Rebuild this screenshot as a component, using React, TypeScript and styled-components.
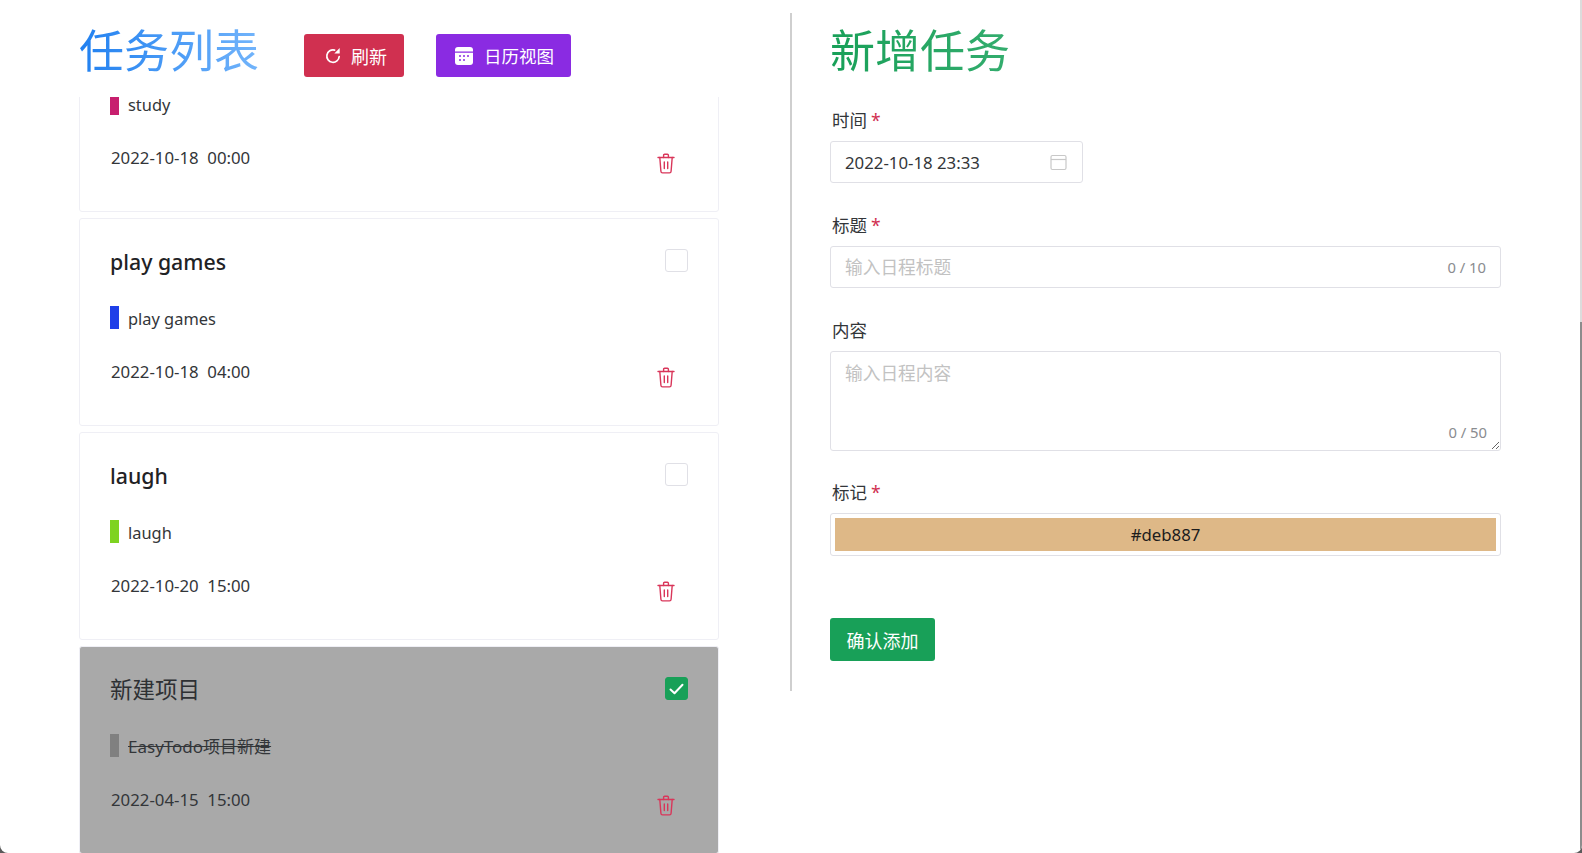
import * as React from "react";
import styled, { createGlobalStyle } from "styled-components";

const FONT = `"Noto Sans", "Noto Sans CJK SC", sans-serif`;

const GlobalStyle = createGlobalStyle`
  html, body {
    margin: 0;
    height: 100%;
    background: #5a5a5a;
    overflow: hidden;
  }
  * {
    box-sizing: border-box;
  }
  #root {
    height: 100%;
  }
`;

const Page = styled.div`
  display: flex;
  width: 1582px;
  height: 853px;
  background: #fff;
  border-radius: 0 0 8px 8px;
  overflow: hidden;
  font-family: ${FONT};
  color: #333639;
`;

const Main = styled.div`
  flex: 1;
  display: flex;
  min-width: 0;
`;

const ScrollTrack = styled.div`
  width: 2px;
  display: flex;
  flex-direction: column;
  background: #dcdcdc;
`;

const ScrollThumb = styled.div`
  margin-top: 322px;
  flex: 1;
  background: #8c8c8c;
`;

const LeftColumn = styled.section`
  width: 790px;
  padding: 0 71px 0 79px;
  display: flex;
  flex-direction: column;
  height: 853px;
`;

const Header = styled.div`
  height: 97px;
  flex-shrink: 0;
  display: flex;
  align-items: flex-start;
`;

const GradientTitle = styled.h1<{ $from: string; $to: string }>`
  margin: 0;
  height: 81px;
  padding-top: 21px;
  font-size: 45px;
  line-height: 60px;
  font-weight: 400;
  background: linear-gradient(90deg, ${p => p.$from}, ${p => p.$to});
  -webkit-background-clip: text;
  background-clip: text;
  color: transparent;
`;

const ActionButton = styled.button<{ $color: string; $left: number; $right: number; $gap: number; $size: number }>`
  height: 43px;
  padding: 0 ${p => p.$right}px 0 ${p => p.$left}px;
  display: flex;
  align-items: center;
  gap: ${p => p.$gap}px;
  border: none;
  border-radius: 3px;
  background: ${p => p.$color};
  color: #fff;
  font-family: ${FONT};
  font-size: ${p => p.$size}px;
  font-weight: 400;
`;

const HeaderButtons = styled.div`
  display: flex;
  gap: 32px;
  margin: 34px 0 0 45px;
`;

const List = styled.div`
  flex: 1;
  min-height: 0;
  margin-bottom: -1px;
  display: flex;
  flex-direction: column;
  justify-content: flex-end;
  gap: 6px;
  overflow: hidden;
`;

const Card = styled.article<{ $done?: boolean }>`
  flex-shrink: 0;
  height: 208px;
  padding: 27px 30px 0;
  border: 1px solid #efeff5;
  border-radius: 3px;
  background: ${p => (p.$done ? "#a9a9a9" : "#fff")};
`;

const CardHead = styled.div`
  height: 32px;
  display: flex;
  align-items: center;
  justify-content: space-between;
`;

const CardTitle = styled.h2<{ $done?: boolean }>`
  margin: 0;
  font-size: ${p => (p.$done ? 22.5 : 21.3)}px;
  line-height: 32px;
  font-weight: ${p => (p.$done ? 400 : 500)};
  color: ${p => (p.$done ? "#2e3033" : "#1f2225")};
`;

const Check = styled.span<{ $on?: boolean }>`
  width: 23px;
  height: 23px;
  align-self: flex-start;
  margin-top: 3px;
  margin-left: auto;
  display: flex;
  align-items: center;
  justify-content: center;
  border-radius: 3px;
  border: 1px solid ${p => (p.$on ? "#18a058" : "#e0e0e6")};
  background: ${p => (p.$on ? "#18a058" : "#fff")};
`;

const TagRow = styled.div`
  margin-top: 28px;
  height: 23px;
  display: flex;
  align-items: center;
  gap: 9px;
`;

const Marker = styled.span<{ $color: string }>`
  width: 9px;
  height: 23px;
  background: ${p => p.$color};
`;

const TagText = styled.span<{ $done?: boolean }>`
  margin-top: 2px;
  font-size: ${p => (p.$done ? 17 : 16.4)}px;
  line-height: 21px;
  font-weight: 400;
  text-decoration: ${p => (p.$done ? "line-through" : "none")};
`;

const DateRow = styled.div`
  margin-top: 32px;
  display: flex;
  align-items: flex-start;
  justify-content: space-between;
  padding-right: 13px;
`;

const DateText = styled.span`
  margin-left: 1px;
  font-size: 16.8px;
  line-height: 22px;
  font-weight: 400;
  white-space: pre;
`;

const TrashButton = styled.span`
  display: flex;
  margin-top: 6px;
`;

const RightColumn = styled.section`
  flex: 1;
  height: 678px;
  margin-top: 13px;
  padding: 0 79px 0 38px;
  border-left: 2px solid #cfcfcf;
`;

const RightHeader = styled.div`
  height: 80px;
  margin-top: -13px;
  margin-bottom: 26px;
`;

const Form = styled.form`
  display: flex;
  flex-direction: column;
`;

const FormItem = styled.div<{ $gap?: number }>`
  margin-bottom: ${p => p.$gap ?? 28}px;
`;

const Label = styled.label`
  display: block;
  height: 35px;
  padding-left: 2px;
  font-size: 17.5px;
  line-height: 28px;
  font-weight: 400;
`;

const Required = styled.span`
  margin-left: 4px;
  color: #d03050;
`;

const Field = styled.div<{ $width?: number }>`
  width: ${p => (p.$width ? `${p.$width}px` : "100%")};
  height: 42px;
  padding: 0 14px;
  display: flex;
  align-items: center;
  gap: 12px;
  border: 1px solid #e0e0e6;
  border-radius: 3px;
  background: #fff;
`;

const TextInput = styled.input`
  flex: 1;
  min-width: 0;
  height: 100%;
  padding: 0;
  border: none;
  outline: none;
  background: transparent;
  font-family: ${FONT};
  font-size: 16.8px;
  font-weight: 400;
  color: #333639;
  &::placeholder {
    color: #c2c2c2;
    font-size: 17.7px;
  }
`;

const Counter = styled.span`
  font-size: 14.8px;
  font-weight: 400;
  color: #8a8c90;
`;

const AreaWrap = styled.div`
  position: relative;
  height: 100px;
`;

const TextArea = styled.textarea`
  display: block;
  width: 100%;
  height: 100%;
  padding: 7px 14px;
  border: 1px solid #e0e0e6;
  border-radius: 3px;
  outline: none;
  resize: vertical;
  font-family: ${FONT};
  font-size: 17.7px;
  font-weight: 400;
  &::placeholder {
    color: #c2c2c2;
  }
`;

const AreaCounter = styled(Counter)`
  position: absolute;
  right: 14px;
  bottom: 9px;
`;

const ColorBox = styled.div`
  height: 43px;
  padding: 4px;
  border: 1px solid #e0e0e6;
  border-radius: 3px;
`;

const ColorSwatch = styled.div<{ $color: string }>`
  height: 100%;
  display: flex;
  align-items: center;
  justify-content: center;
  background: ${p => p.$color};
  font-size: 16.8px;
  font-weight: 400;
  color: #1c1c1c;
`;

const SubmitButton = styled.button`
  align-self: flex-start;
  width: 105px;
  height: 43px;
  padding: 0;
  border: none;
  border-radius: 3px;
  background: #18a058;
  color: #fff;
  font-family: ${FONT};
  font-size: 18px;
  font-weight: 400;
`;

const RefreshIcon = () => (
  <svg width="16" height="17" viewBox="0 0 16 17" fill="none">
    <path d="M9.6 3.1A6.2 6.2 0 1 0 14.2 9.5" stroke="#fff" strokeWidth="1.7" strokeLinecap="round" />
    <path d="M14.7 1v5.4H9.3z" fill="#fff" />
  </svg>
);

const CalendarIcon = () => (
  <svg width="18" height="18" viewBox="0 0 18 18">
    <path d="M3 0h12a3 3 0 0 1 3 3v1.4H0V3a3 3 0 0 1 3-3z" fill="#fff" />
    <path d="M0 5.8h18V15a3 3 0 0 1-3 3H3a3 3 0 0 1-3-3z" fill="#fff" />
    <g fill="#8a2be2">
      <circle cx="5" cy="9" r="1" />
      <circle cx="9" cy="9" r="1" />
      <circle cx="13" cy="9" r="1" />
      <circle cx="5" cy="13" r="1" />
      <circle cx="9" cy="13" r="1" />
    </g>
  </svg>
);

const TrashIcon = () => (
  <svg width="18" height="21" viewBox="0 0 18 21" fill="none" stroke="#d9365a" strokeWidth="1.4" strokeLinecap="round" strokeLinejoin="round">
    <path d="M1 4.5h16" />
    <path d="M6.6 4.5V2.2q0-1 1-1h2.8q1 0 1 1v2.3" />
    <path d="M2.8 4.5l1.1 13.8q.1 1.6 1.6 1.6h7q1.5 0 1.6-1.6L15.2 4.5" />
    <path d="M7.3 9v6.5M10.7 9v6.5" />
  </svg>
);

const CheckMark = () => (
  <svg width="15" height="12" viewBox="0 0 15 12" fill="none">
    <path d="M1.5 6.5l4 3.8 8-8.5" stroke="#fff" strokeWidth="2" strokeLinecap="round" strokeLinejoin="round" />
  </svg>
);

const DateFieldIcon = styled(({ className }: { className?: string }) => (
  <svg className={className} width="17" height="17" viewBox="0 0 17 17" fill="none" stroke="#c8c8c8" strokeWidth="1.2">
    <rect x="1" y="1.5" width="15" height="14" rx="1.5" />
    <path d="M1 5.5h15" />
  </svg>
))`
  margin-right: 1px;
`;

interface Task {
  title?: string;
  tag: string;
  color: string;
  time: string;
  done?: boolean;
}

// the first card is scrolled past the top of the list, its title is out of view
const tasks: Task[] = [
  { tag: "study", color: "#c71f6e", time: "2022-10-18  00:00" },
  { title: "play games", tag: "play games", color: "#1f3fe8", time: "2022-10-18  04:00" },
  { title: "laugh", tag: "laugh", color: "#7ed321", time: "2022-10-20  15:00" },
  { title: "新建项目", tag: "EasyTodo项目新建", color: "#808080", time: "2022-04-15  15:00", done: true }
];

const App: React.FC = () => (
  <Page>
    <GlobalStyle />
    <Main>
      <LeftColumn>
        <Header>
          <GradientTitle $from="#2080f0" $to="#72b4fb">任务列表</GradientTitle>
          <HeaderButtons>
            <ActionButton type="button" $color="#d03050" $left={21} $right={17} $gap={10} $size={18}>
              <RefreshIcon />
              刷新
            </ActionButton>
            <ActionButton type="button" $color="#8a2be2" $left={19} $right={17} $gap={11} $size={17.5}>
              <CalendarIcon />
              日历视图
            </ActionButton>
          </HeaderButtons>
        </Header>
        <List>
          {tasks.map(task => (
            <Card key={task.tag} $done={task.done}>
              <CardHead>
                {task.title && <CardTitle $done={task.done}>{task.title}</CardTitle>}
                <Check $on={task.done}>{task.done && <CheckMark />}</Check>
              </CardHead>
              <TagRow>
                <Marker $color={task.color} />
                <TagText $done={task.done}>{task.tag}</TagText>
              </TagRow>
              <DateRow>
                <DateText>{task.time}</DateText>
                <TrashButton>
                  <TrashIcon />
                </TrashButton>
              </DateRow>
            </Card>
          ))}
        </List>
      </LeftColumn>
      <RightColumn>
        <RightHeader>
          <GradientTitle $from="#18a058" $to="#7fd0aa">新增任务</GradientTitle>
        </RightHeader>
        <Form>
          <FormItem>
            <Label>时间<Required>*</Required></Label>
            <Field $width={253}>
              <TextInput readOnly value="2022-10-18 23:33" />
              <DateFieldIcon />
            </Field>
          </FormItem>
          <FormItem>
            <Label>标题<Required>*</Required></Label>
            <Field>
              <TextInput placeholder="输入日程标题" />
              <Counter>0 / 10</Counter>
            </Field>
          </FormItem>
          <FormItem $gap={27}>
            <Label>内容</Label>
            <AreaWrap>
              <TextArea placeholder="输入日程内容" />
              <AreaCounter>0 / 50</AreaCounter>
            </AreaWrap>
          </FormItem>
          <FormItem $gap={62}>
            <Label>标记<Required>*</Required></Label>
            <ColorBox>
              <ColorSwatch $color="#deb887">#deb887</ColorSwatch>
            </ColorBox>
          </FormItem>
          <SubmitButton type="button">确认添加</SubmitButton>
        </Form>
      </RightColumn>
    </Main>
    <ScrollTrack>
      <ScrollThumb />
    </ScrollTrack>
  </Page>
);

export default App;
